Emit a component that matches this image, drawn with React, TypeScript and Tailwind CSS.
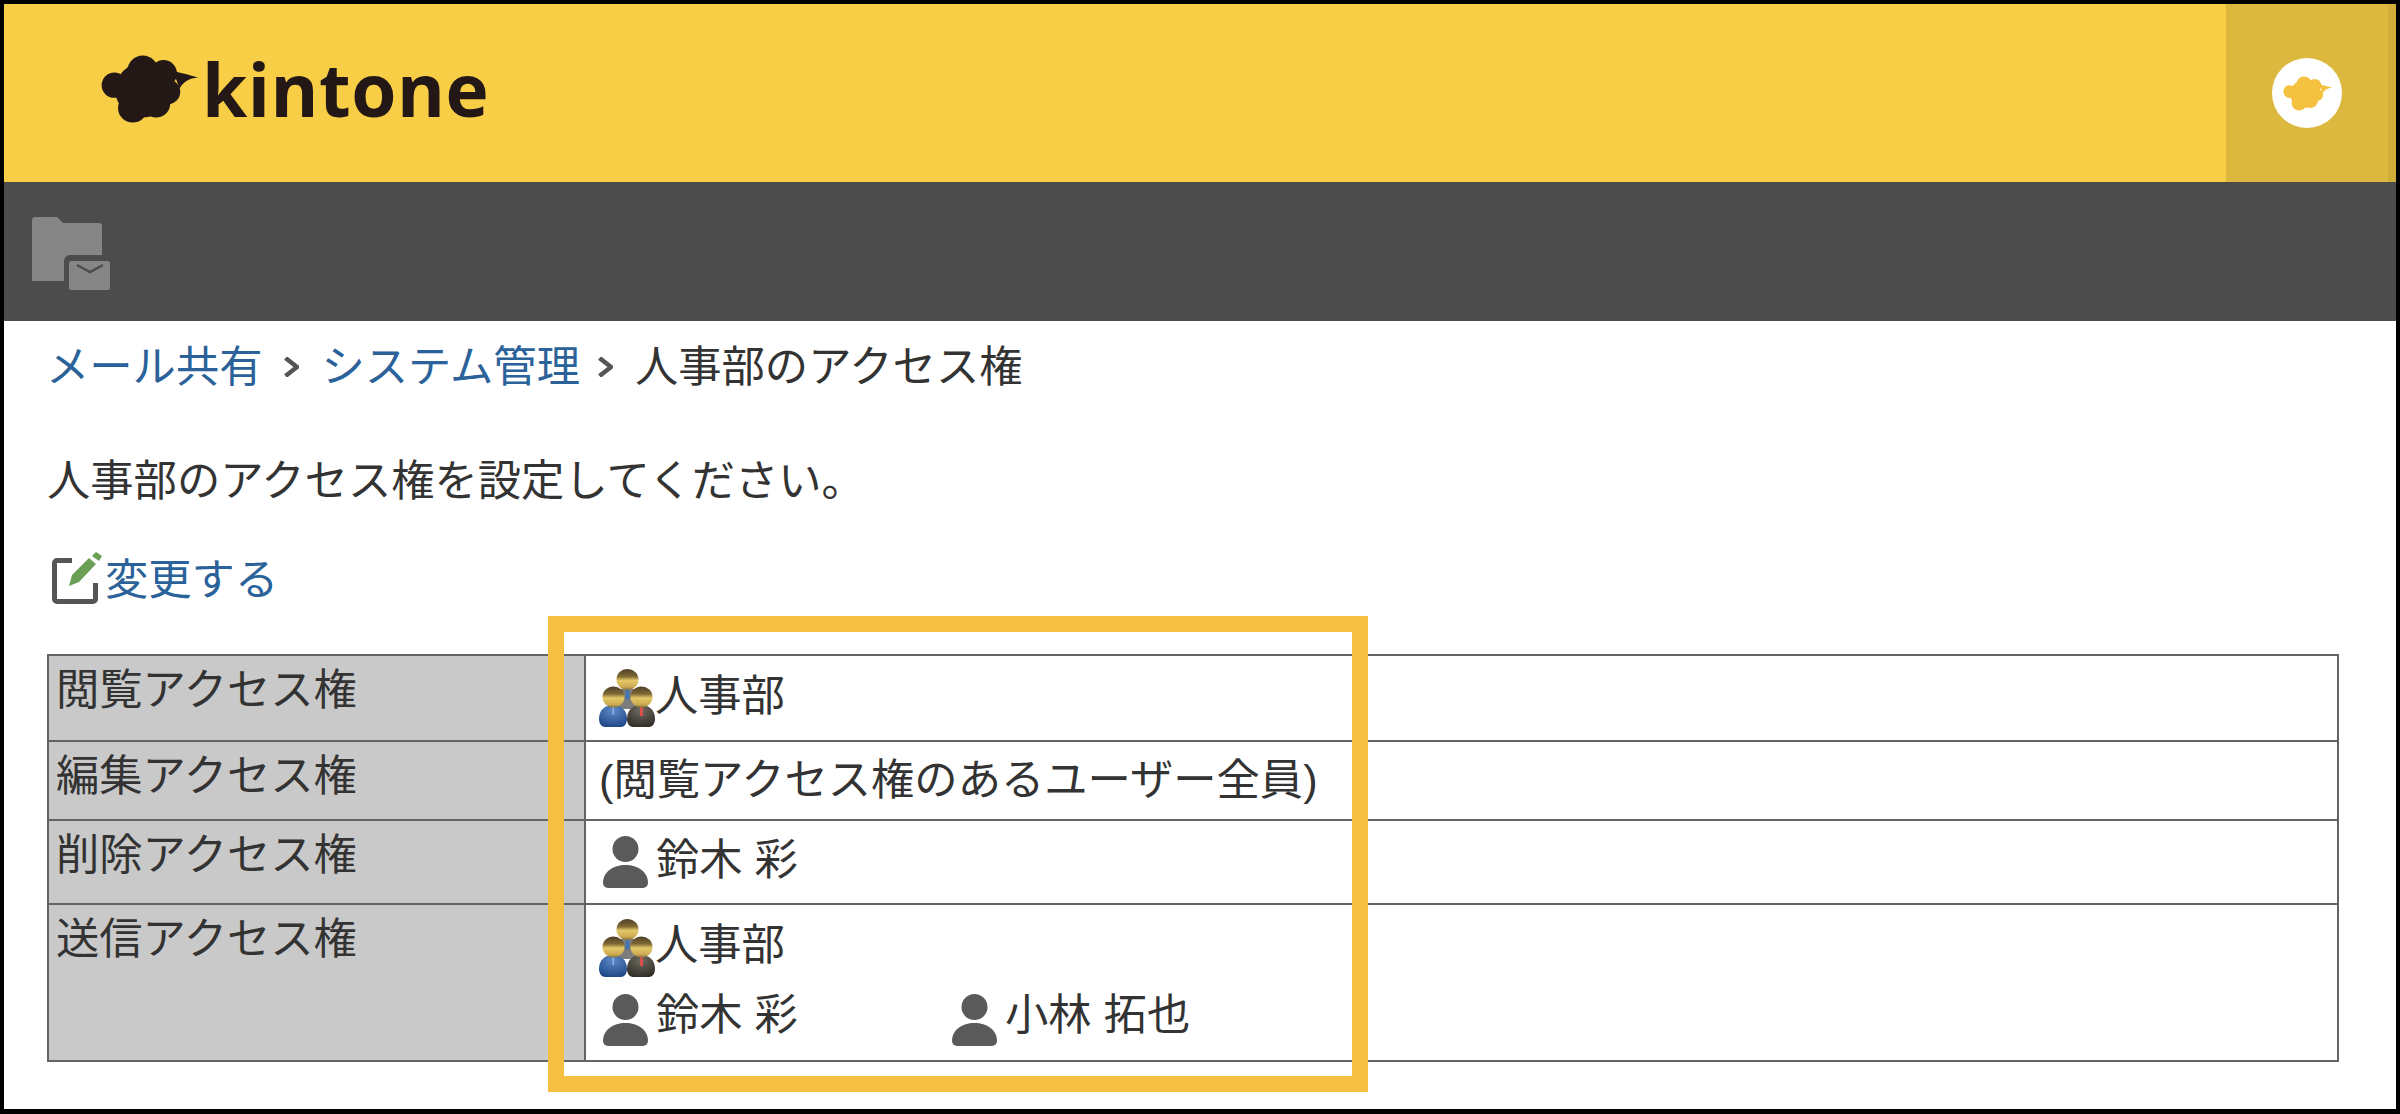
import React from 'react';

const FONT = 'font-["Liberation_Sans","Noto_Sans_CJK_JP",sans-serif]';

const Cloud = ({ className }: { className: string }) => (
  <svg viewBox="35 45 290 203" className={className} fill="currentColor">
    <circle cx="75" cy="135" r="38" />
    <circle cx="160" cy="92" r="46" />
    <circle cx="222" cy="100" r="40" />
    <circle cx="160" cy="150" r="82" />
    <circle cx="130" cy="203" r="44" />
    <circle cx="200" cy="190" r="42" />
    <circle cx="235" cy="155" r="37" />
    <path d="M250 92 C280 100 305 106 325 112 C298 114 282 124 270 145 Z" />
  </svg>
);

const FolderMail = () => (
  <svg viewBox="0 0 78 73" className="w-[78px] h-[73px] ml-[28px] mt-[35px]">
    <path
      d="M3 0H25L31 6H67a3 3 0 0 1 3 3V64H0V3a3 3 0 0 1 3-3Z"
      fill="#868686"
    />
    <rect x="32" y="38" width="46" height="35" rx="6" fill="#4c4c4c" />
    <rect x="37" y="44" width="41" height="29" rx="2.5" fill="#868686" />
    <path d="M45 48L58 55L71 48" fill="none" stroke="#4c4c4c" strokeWidth="2.5" />
  </svg>
);

const EditIcon = () => (
  <svg viewBox="0 0 52 52" className="w-[52px] h-[52px] shrink-0 mt-[2px]">
    <path
      d="M20 8.5H5a2.5 2.5 0 0 0-2.5 2.5V47a2.5 2.5 0 0 0 2.5 2.500H41a2.500 2.500 0 0 0 2.500-2.500V31"
      fill="none"
      stroke="#555555"
      strokeWidth="5"
    />
    <path d="M17 34L20 23L37 6L44 12L27 30Z" fill="#6a9f55" />
    <path d="M40 4L44 0L50 4L47 9Z" fill="#6a9f55" />
  </svg>
);

const Chevron = () => (
  <svg viewBox="0 0 15 20" className="w-[15px] h-[20px] shrink-0">
    <path d="M1.500 1L13 10L1.500 19" fill="none" stroke="#555555" strokeWidth="4.500" />
  </svg>
);

const Head = ({ x, y }: { x: number; y: number }) => (
  <ellipse cx={x} cy={y} rx="11" ry="10.500" fill="url(#head)" />
);

const GroupDefs = () => (
  <svg className="absolute w-0 h-0">
    <defs>
      <linearGradient id="head" x1="0" y1="0" x2="0" y2="1">
        <stop offset="0" stopColor="#4f3f26" />
        <stop offset="0.35" stopColor="#7d6834" />
        <stop offset="0.55" stopColor="#e3c868" />
        <stop offset="0.85" stopColor="#cdaa52" />
        <stop offset="1" stopColor="#84703c" />
      </linearGradient>
      <radialGradient id="blue" cx="0.5" cy="0.25" r="0.8">
        <stop offset="0" stopColor="#5d8ac8" />
        <stop offset="1" stopColor="#1d4585" />
      </radialGradient>
      <radialGradient id="dark" cx="0.5" cy="0.25" r="0.8">
        <stop offset="0" stopColor="#6f6a60" />
        <stop offset="1" stopColor="#2e2b25" />
      </radialGradient>
    </defs>
  </svg>
);

const GroupIcon = ({ className }: { className: string }) => (
  <svg viewBox="0 0 56 58" className={`w-[56px] h-[58px] shrink-0 blur-[0.7px] ${className}`}>
    <path d="M15 40V28c0-6 7-9 13.500-9S42 22 42 28V40Z" fill="#7c7c7c" />
    <path d="M27 19h3l.500 11h-4Z" fill="#3f74b8" />
    <Head x={28.5} y={10.5} />
    <path d="M0 50c0-9 6-14 14-14s14 5 14 14c0 5-3 8-6 8H6c-3 0-6-3-6-8Z" fill="url(#blue)" />
    <path d="M13.500 37h1.500v9h-1.500Z" fill="#8fb0de" />
    <Head x={14.5} y={28} />
    <path d="M28 50c0-9 6-14 14-14s14 5 14 14c0 5-3 8-6 8H34c-3 0-6-3-6-8Z" fill="url(#dark)" />
    <path d="M41 37h3v10h-3Z" fill="#d9504a" />
    <Head x={42.5} y={28} />
  </svg>
);

const PersonIcon = ({ className }: { className: string }) => (
  <svg viewBox="0 0 45 52" className={`w-[45px] h-[52px] shrink-0 ${className}`} fill="#5a5a5a">
    <circle cx="22.500" cy="13" r="13" />
    <path d="M0 47C0 36 10 29 22.500 29S45 36 45 47a5 5 0 0 1-5 5H5a5 5 0 0 1-5-5Z" />
  </svg>
);

const Person = ({ name, className, iconClass }: { name: string; className: string; iconClass: string }) => (
  <div className={`flex items-start ${className}`}>
    <PersonIcon className={`ml-[17px] mr-[8px] ${iconClass}`} />
    <span>{name}</span>
  </div>
);

const Department = ({ iconClass }: { iconClass: string }) => (
  <div className="flex items-start">
    <GroupIcon className={`ml-[13px] ${iconClass}`} />
    <span>人事部</span>
  </div>
);

const rows = [
  {
    label: '閲覧アクセス権',
    height: 'h-[86px]',
    pad: 'pt-[10px]',
    body: <Department iconClass="mt-[3px]" />,
  },
  {
    label: '編集アクセス権',
    height: 'h-[79px]',
    pad: 'pt-[8px]',
    body: <div className="pl-[13px]">(閲覧アクセス権のあるユーザー全員)</div>,
  },
  {
    label: '削除アクセス権',
    height: 'h-[84px]',
    pad: 'pt-[9px]',
    body: <Person name="鈴木 彩" className="" iconClass="mt-[6px]" />,
  },
  {
    label: '送信アクセス権',
    height: 'h-[157px]',
    pad: 'pt-[10px]',
    body: (
      <>
        <Department iconClass="mt-[4px]" />
        <div className="flex mt-[8px]">
          <Person name="鈴木 彩" className="w-[349px]" iconClass="mt-[9px]" />
          <Person name="小林 拓也" className="" iconClass="mt-[9px]" />
        </div>
      </>
    ),
  },
];

export default function App() {
  return (
    <div
      className={`relative box-border w-[2400px] h-[1114px] overflow-hidden bg-white border-t-4 border-x-4 border-b-[5px] border-black text-[#333333] text-[43.300px] leading-[60px] ${FONT}`}
    >
      <GroupDefs />
      {/* Header */}
      <div className="flex h-[178px] bg-[#f8ce46]">
        <div className="flex flex-1 items-start pl-[97px]">
          <Cloud className="w-[97px] h-[68px] mt-[51px] text-[#231815]" />
          <span className="ml-[4px] mt-[32px] font-['Open_Sans',sans-serif] font-bold text-[73px] leading-[106px] tracking-[0.500px] text-[#231815]">
            kintone
          </span>
        </div>
        <div className="flex w-[170px] bg-[#dcb93e]">
          <div className="flex flex-1 items-center justify-center">
            <div className="flex w-[70px] h-[70px] items-center justify-center rounded-full bg-white">
              <Cloud className="w-[49px] h-[35px] text-[#f4c23f]" />
            </div>
          </div>
          <div className="w-[8px] bg-[#cfae3a]" />
        </div>
      </div>

      {/* App bar */}
      <div className="h-[139px] bg-[#4c4c4c] overflow-hidden">
        <FolderMail />
      </div>

      {/* Content */}
      <div className="pl-[43px] pt-[16px]">
        <nav className="flex items-center -ml-[1px]">
          <a className="text-[#2a6299]">メール共有</a>
          <span className="ml-[22px] mr-[22px] flex">
            <Chevron />
          </span>
          <a className="text-[#2a6299]">システム管理</a>
          <span className="ml-[18px] mr-[22px] flex">
            <Chevron />
          </span>
          <span>人事部のアクセス権</span>
        </nav>
        <p className="mt-[54px]">人事部のアクセス権を設定してください。</p>
        <a className="flex items-start mt-[39px] ml-[5px] text-[#2a6299]">
          <EditIcon />
          <span className="ml-[1px]">変更する</span>
        </a>

        <table className="mt-[44px] w-[2292px] table-fixed border-collapse">
          <colgroup>
            <col className="w-[537px]" />
            <col />
          </colgroup>
          <tbody>
            {rows.map((row) => (
              <tr key={row.label} className={row.height}>
                <td className="border-2 border-[#646464] bg-[#c9c9c9] align-top pl-[7px] pt-[4px]">
                  {row.label}
                </td>
                <td className={`border-2 border-[#646464] align-top ${row.pad}`}>{row.body}</td>
              </tr>
            ))}
          </tbody>
        </table>
      </div>

      {/* Highlight over the table */}
      <div className="absolute left-[544px] top-[612px] w-[820px] h-[476px] border-[16px] border-[#f5bf41]" />
    </div>
  );
}
